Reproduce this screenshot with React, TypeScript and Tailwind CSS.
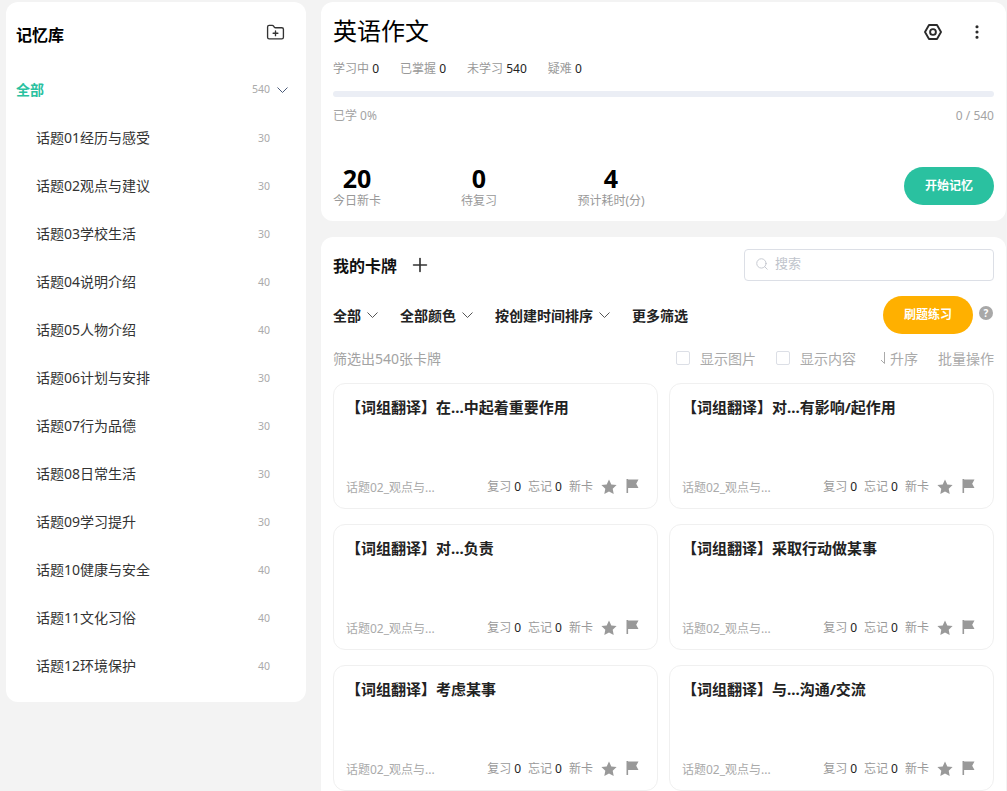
import React from "react";
import { Plus, Search, FolderPlus, MoreVertical } from "lucide-react";

const topics = [
  ["话题01经历与感受", 30],
  ["话题02观点与建议", 30],
  ["话题03学校生活", 30],
  ["话题04说明介绍", 40],
  ["话题05人物介绍", 40],
  ["话题06计划与安排", 30],
  ["话题07行为品德", 30],
  ["话题08日常生活", 30],
  ["话题09学习提升", 30],
  ["话题10健康与安全", 40],
  ["话题11文化习俗", 40],
  ["话题12环境保护", 40],
] as const;

const cards = [
  "【词组翻译】在...中起着重要作用",
  "【词组翻译】对...有影响/起作用",
  "【词组翻译】对...负责",
  "【词组翻译】采取行动做某事",
  "【词组翻译】考虑某事",
  "【词组翻译】与...沟通/交流",
];

const stats = [
  ["学习中", "0"],
  ["已掌握", "0"],
  ["未学习", "540"],
  ["疑难", "0"],
];

/* shallow chevron, wider than the lucide one */
const Chevron = ({ className }: { className: string }) => (
  <svg viewBox="0 0 11 6" className={`w-[11px] h-[6px] ${className}`} fill="none" stroke="currentColor" strokeWidth="1">
    <path d="M.5.5l5 5 5-5" />
  </svg>
);

const Sidebar = () => (
  <aside className="w-[300px] h-[700px] shrink-0 bg-white rounded-[12px] pl-[10px] pr-[36px]">
    <div className="h-[63px] flex items-center justify-between">
      <h2 className="text-[16px] leading-[24px] font-bold text-black pt-[3px]">记忆库</h2>
      <FolderPlus className="w-[19px] h-[19px] text-[#333] mb-[3px] mr-[-15px]" strokeWidth={1.7} />
    </div>
    <div className="h-[48px] flex items-center justify-between">
      <span className="text-[14px] font-bold text-[#2bc1a0]">全部</span>
      <span className="flex items-center gap-[7px] mr-[-18px]">
        <span className="text-[10.5px] text-[#aaa] mt-[2px]">540</span>
        <Chevron className="text-[#4a5a78] mt-[1px]" />
      </span>
    </div>
    {topics.map(([name, count]) => (
      <div key={name} className="h-[48px] flex items-center justify-between pl-[20px]">
        <span className="text-[14px] text-[#333]">{name}</span>
        <span className="text-[10.5px] text-[#aaa] mt-[3px]">{count}</span>
      </div>
    ))}
  </aside>
);

const Stat = ({ value, label, className }: { value: string; label: string; className: string }) => (
  <div className={`flex flex-col items-center ${className}`}>
    <span className="text-[25px] leading-[28px] font-bold text-black">{value}</span>
    <span className="text-[12px] leading-[18px] text-[#999] whitespace-nowrap">{label}</span>
  </div>
);

const HeaderCard = () => (
  <section className="h-[219px] bg-white rounded-[12px] px-[12px]">
    <div className="flex items-center justify-between h-[58px]">
      <h1 className="text-[24px] leading-[32px] text-black">英语作文</h1>
      <div className="flex items-center gap-[26px] pr-[8px] pt-[2px]">
        <svg viewBox="0 0 18 16" className="w-[18px] h-[16px]" fill="none" stroke="#2b2b2b" strokeWidth="1.9">
          <path d="M5 1h8l4 7-4 7H5L1 8z" strokeLinejoin="round" />
          <circle cx="9" cy="8" r="2.9" />
        </svg>
        <MoreVertical className="w-[18px] h-[18px] text-[#2b2b2b]" strokeWidth={2.2} />
      </div>
    </div>
    <div className="flex gap-[21px] text-[12px] leading-[20px] mt-[-1px]">
      {stats.map(([label, value]) => (
        <span key={label} className="text-[#999]">
          {label} <span className="text-[#222]">{value}</span>
        </span>
      ))}
    </div>
    <div className="h-[6px] rounded-full bg-[#ebeef5] mt-[12px]" />
    <div className="flex justify-between text-[12px] leading-[20px] text-[#a3a3a3] mt-[9px]">
      <span>已学 0%</span>
      <span>0 / 540</span>
    </div>
    <div className="flex items-end justify-between mt-[38px]">
      <div className="flex">
        <Stat value="20" label="今日新卡" className="w-[48px]" />
        <Stat value="0" label="待复习" className="w-[36px] ml-[80px]" />
        <Stat value="4" label="预计耗时(分)" className="w-[68px] ml-[80px]" />
      </div>
      <button className="w-[90px] h-[38px] rounded-full bg-[#2ac1a0] text-white text-[12px] font-bold mb-[5px]">开始记忆</button>
    </div>
  </section>
);

const Dropdown = ({ label }: { label: string }) => (
  <span className="flex items-center gap-[6px] text-[14px] font-bold text-[#222]">
    {label}
    <Chevron className="text-[#555]" />
  </span>
);

const Check = ({ label }: { label: string }) => (
  <span className="flex items-center gap-[10px] text-[14px] text-[#aaa]">
    <span className="w-[14px] h-[14px] rounded-[2px] border border-[#dcdfe6]" />
    {label}
  </span>
);

const Card = ({ title }: { title: string }) => (
  <div className="h-[126px] rounded-[12px] border border-[#f0f0f0] flex flex-col justify-between pl-[12px] pr-[18px] pt-[12px] pb-[11px]">
    <div className="text-[15px] leading-[22px] font-bold text-[#222]">{title}</div>
    <div className="flex items-center justify-between">
      <span className="text-[12px] text-[#aaa] mt-[3px]">话题02_观点与...</span>
      <span className="flex items-center text-[12px] text-[#999]">
        复习 <span className="text-[#222] ml-[3px] mr-[7px]">0</span>
        忘记 <span className="text-[#222] ml-[3px] mr-[7px]">0</span>
        新卡
        <svg viewBox="0 0 16 16" className="w-[16px] h-[16px] ml-[8px]" fill="#999">
          <path d="M8 .5l2.3 4.9 5.3.7-3.9 3.6 1 5.3L8 12.4l-4.7 2.6 1-5.3L.4 6.1l5.3-.7z" />
        </svg>
        <svg viewBox="0 0 13 14" className="w-[13px] h-[14px] ml-[9px] mb-[1px]" fill="#999">
          <path d="M.5 0h1.6v14H.5zM2.1.5H12.5L10.2 4.7l2.3 4.3H2.1z" />
        </svg>
      </span>
    </div>
  </div>
);

const DeckCard = () => (
  <section className="bg-white rounded-t-[12px] px-[12px] pt-[12px] h-[554px] overflow-hidden">
    <div className="flex items-center justify-between h-[32px]">
      <div className="flex items-center gap-[12px]">
        <h2 className="text-[16px] font-bold text-[#111] pt-[2px]">我的卡牌</h2>
        <Plus className="w-[22px] h-[22px] text-[#333]" strokeWidth={1.8} />
      </div>
      <div className="w-[250px] h-[32px] rounded-[4px] border border-[#dcdfe6] flex items-center pl-[10px] pb-[2px] gap-[6px] text-[13px] text-[#c0c4cc]">
        <Search className="w-[14px] h-[14px]" strokeWidth={1.5} />
        搜索
      </div>
    </div>
    <div className="flex items-center justify-between h-[38px] mt-[15px]">
      <div className="flex items-center gap-[22px]">
        <Dropdown label="全部" />
        <Dropdown label="全部颜色" />
        <Dropdown label="按创建时间排序" />
        <span className="text-[14px] font-bold text-[#222]">更多筛选</span>
      </div>
      <div className="relative mr-[21px]">
        <button className="w-[90px] h-[38px] rounded-full bg-[#ffb000] text-white text-[12px] font-bold">刷题练习</button>
        <span className="absolute left-[96px] top-[10px] w-[14px] h-[14px] rounded-full bg-[#a8a8a8] text-white text-[10px] leading-[14px] font-bold text-center">?</span>
      </div>
    </div>
    <div className="flex items-center justify-between h-[20px] mt-[14px]">
      <span className="text-[14px] text-[#a3a3a3]">筛选出540张卡牌</span>
      <div className="flex items-center gap-[20px]">
        <Check label="显示图片" />
        <Check label="显示内容" />
        <span className="flex items-center gap-[4px] text-[14px] text-[#aaa] ml-[4px]">
          <svg viewBox="0 0 6 12" className="w-[6px] h-[12px]" fill="none" stroke="#aaa" strokeWidth="1">
            <path d="M4.5 0v11.5L1 8" />
          </svg>
          升序
        </span>
        <span className="text-[14px] text-[#aaa]">批量操作</span>
      </div>
    </div>
    <div className="grid grid-cols-2 gap-x-[11px] gap-y-[15px] mt-[15px]">
      {cards.map((title) => (
        <Card key={title} title={title} />
      ))}
    </div>
  </section>
);

export default function App() {
  return (
    <div
      className="h-[791px] w-[1007px] overflow-hidden bg-[#f3f3f3] flex gap-[15px] pl-[6px] pt-[2px] pr-[1px]"
      style={{ fontFamily: '"Noto Sans", "Noto Sans CJK SC", sans-serif' }}
    >
      <Sidebar />
      <main className="flex-1 flex flex-col gap-[16px] min-w-0">
        <HeaderCard />
        <DeckCard />
      </main>
    </div>
  );
}
